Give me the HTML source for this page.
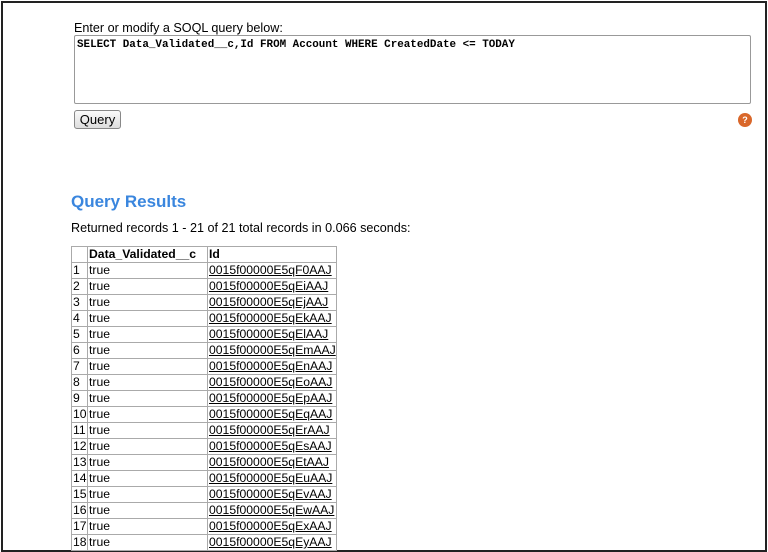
<!DOCTYPE html>
<html><head><style>
body{margin:0;width:768px;height:552px;overflow:hidden;background:#fff;font-family:"Liberation Sans",sans-serif;font-size:12.6px;color:#000}
.frame{position:absolute;left:1px;top:1px;width:762px;height:547px;border:2px solid #222;}
.abs{position:absolute}
.ta{left:74px;top:35px;border:1px solid #999;border-radius:2px;font-family:"Liberation Mono",monospace;font-weight:bold;font-size:10.9px;padding:3px 2px;box-sizing:border-box;width:677px;height:69px}
.btn{left:74px;top:110px;width:47px;height:19px;border:1px solid #888;border-radius:3px;background:linear-gradient(#fafafa,#ddd);box-sizing:border-box;text-align:center;line-height:17px;font-size:13px}
.help{left:738px;top:113px;width:14px;height:14px;border-radius:50%;background:#d9672a;color:#fff;font-size:9px;font-weight:bold;text-align:center;line-height:14px}
h2{position:absolute;left:71px;top:192px;margin:0;font-size:17px;color:#3a86de;font-weight:bold}
table{position:absolute;left:71px;top:246px;border-collapse:collapse;font-size:12.2px;table-layout:fixed;width:265px}
td,th{border:1px solid #aaa;height:15px;padding:0 1px;line-height:15px;text-align:left;white-space:nowrap;overflow:hidden}
th{font-weight:bold}
a{color:#000;text-decoration:underline}
</style></head><body>
<div class="frame"></div>
<div class="abs" style="left:74px;top:21px">Enter or modify a SOQL query below:</div>
<div class="abs ta">SELECT Data_Validated__c,Id FROM Account WHERE CreatedDate &lt;= TODAY</div>
<div class="abs btn">Query</div>
<div class="abs help">?</div>
<h2>Query Results</h2>
<div class="abs" style="left:71px;top:221px">Returned records 1 - 21 of 21 total records in 0.066 seconds:</div>
<table>
<colgroup><col style="width:16px"><col style="width:120px"><col style="width:129px"></colgroup>
<tr><th></th><th>Data_Validated__c</th><th>Id</th></tr>
<tr><td>1</td><td>true</td><td><a>0015f00000E5qF0AAJ</a></td></tr>
<tr><td>2</td><td>true</td><td><a>0015f00000E5qEiAAJ</a></td></tr>
<tr><td>3</td><td>true</td><td><a>0015f00000E5qEjAAJ</a></td></tr>
<tr><td>4</td><td>true</td><td><a>0015f00000E5qEkAAJ</a></td></tr>
<tr><td>5</td><td>true</td><td><a>0015f00000E5qElAAJ</a></td></tr>
<tr><td>6</td><td>true</td><td><a>0015f00000E5qEmAAJ</a></td></tr>
<tr><td>7</td><td>true</td><td><a>0015f00000E5qEnAAJ</a></td></tr>
<tr><td>8</td><td>true</td><td><a>0015f00000E5qEoAAJ</a></td></tr>
<tr><td>9</td><td>true</td><td><a>0015f00000E5qEpAAJ</a></td></tr>
<tr><td>10</td><td>true</td><td><a>0015f00000E5qEqAAJ</a></td></tr>
<tr><td>11</td><td>true</td><td><a>0015f00000E5qErAAJ</a></td></tr>
<tr><td>12</td><td>true</td><td><a>0015f00000E5qEsAAJ</a></td></tr>
<tr><td>13</td><td>true</td><td><a>0015f00000E5qEtAAJ</a></td></tr>
<tr><td>14</td><td>true</td><td><a>0015f00000E5qEuAAJ</a></td></tr>
<tr><td>15</td><td>true</td><td><a>0015f00000E5qEvAAJ</a></td></tr>
<tr><td>16</td><td>true</td><td><a>0015f00000E5qEwAAJ</a></td></tr>
<tr><td>17</td><td>true</td><td><a>0015f00000E5qExAAJ</a></td></tr>
<tr><td>18</td><td>true</td><td><a>0015f00000E5qEyAAJ</a></td></tr>
</table>
</body></html>
